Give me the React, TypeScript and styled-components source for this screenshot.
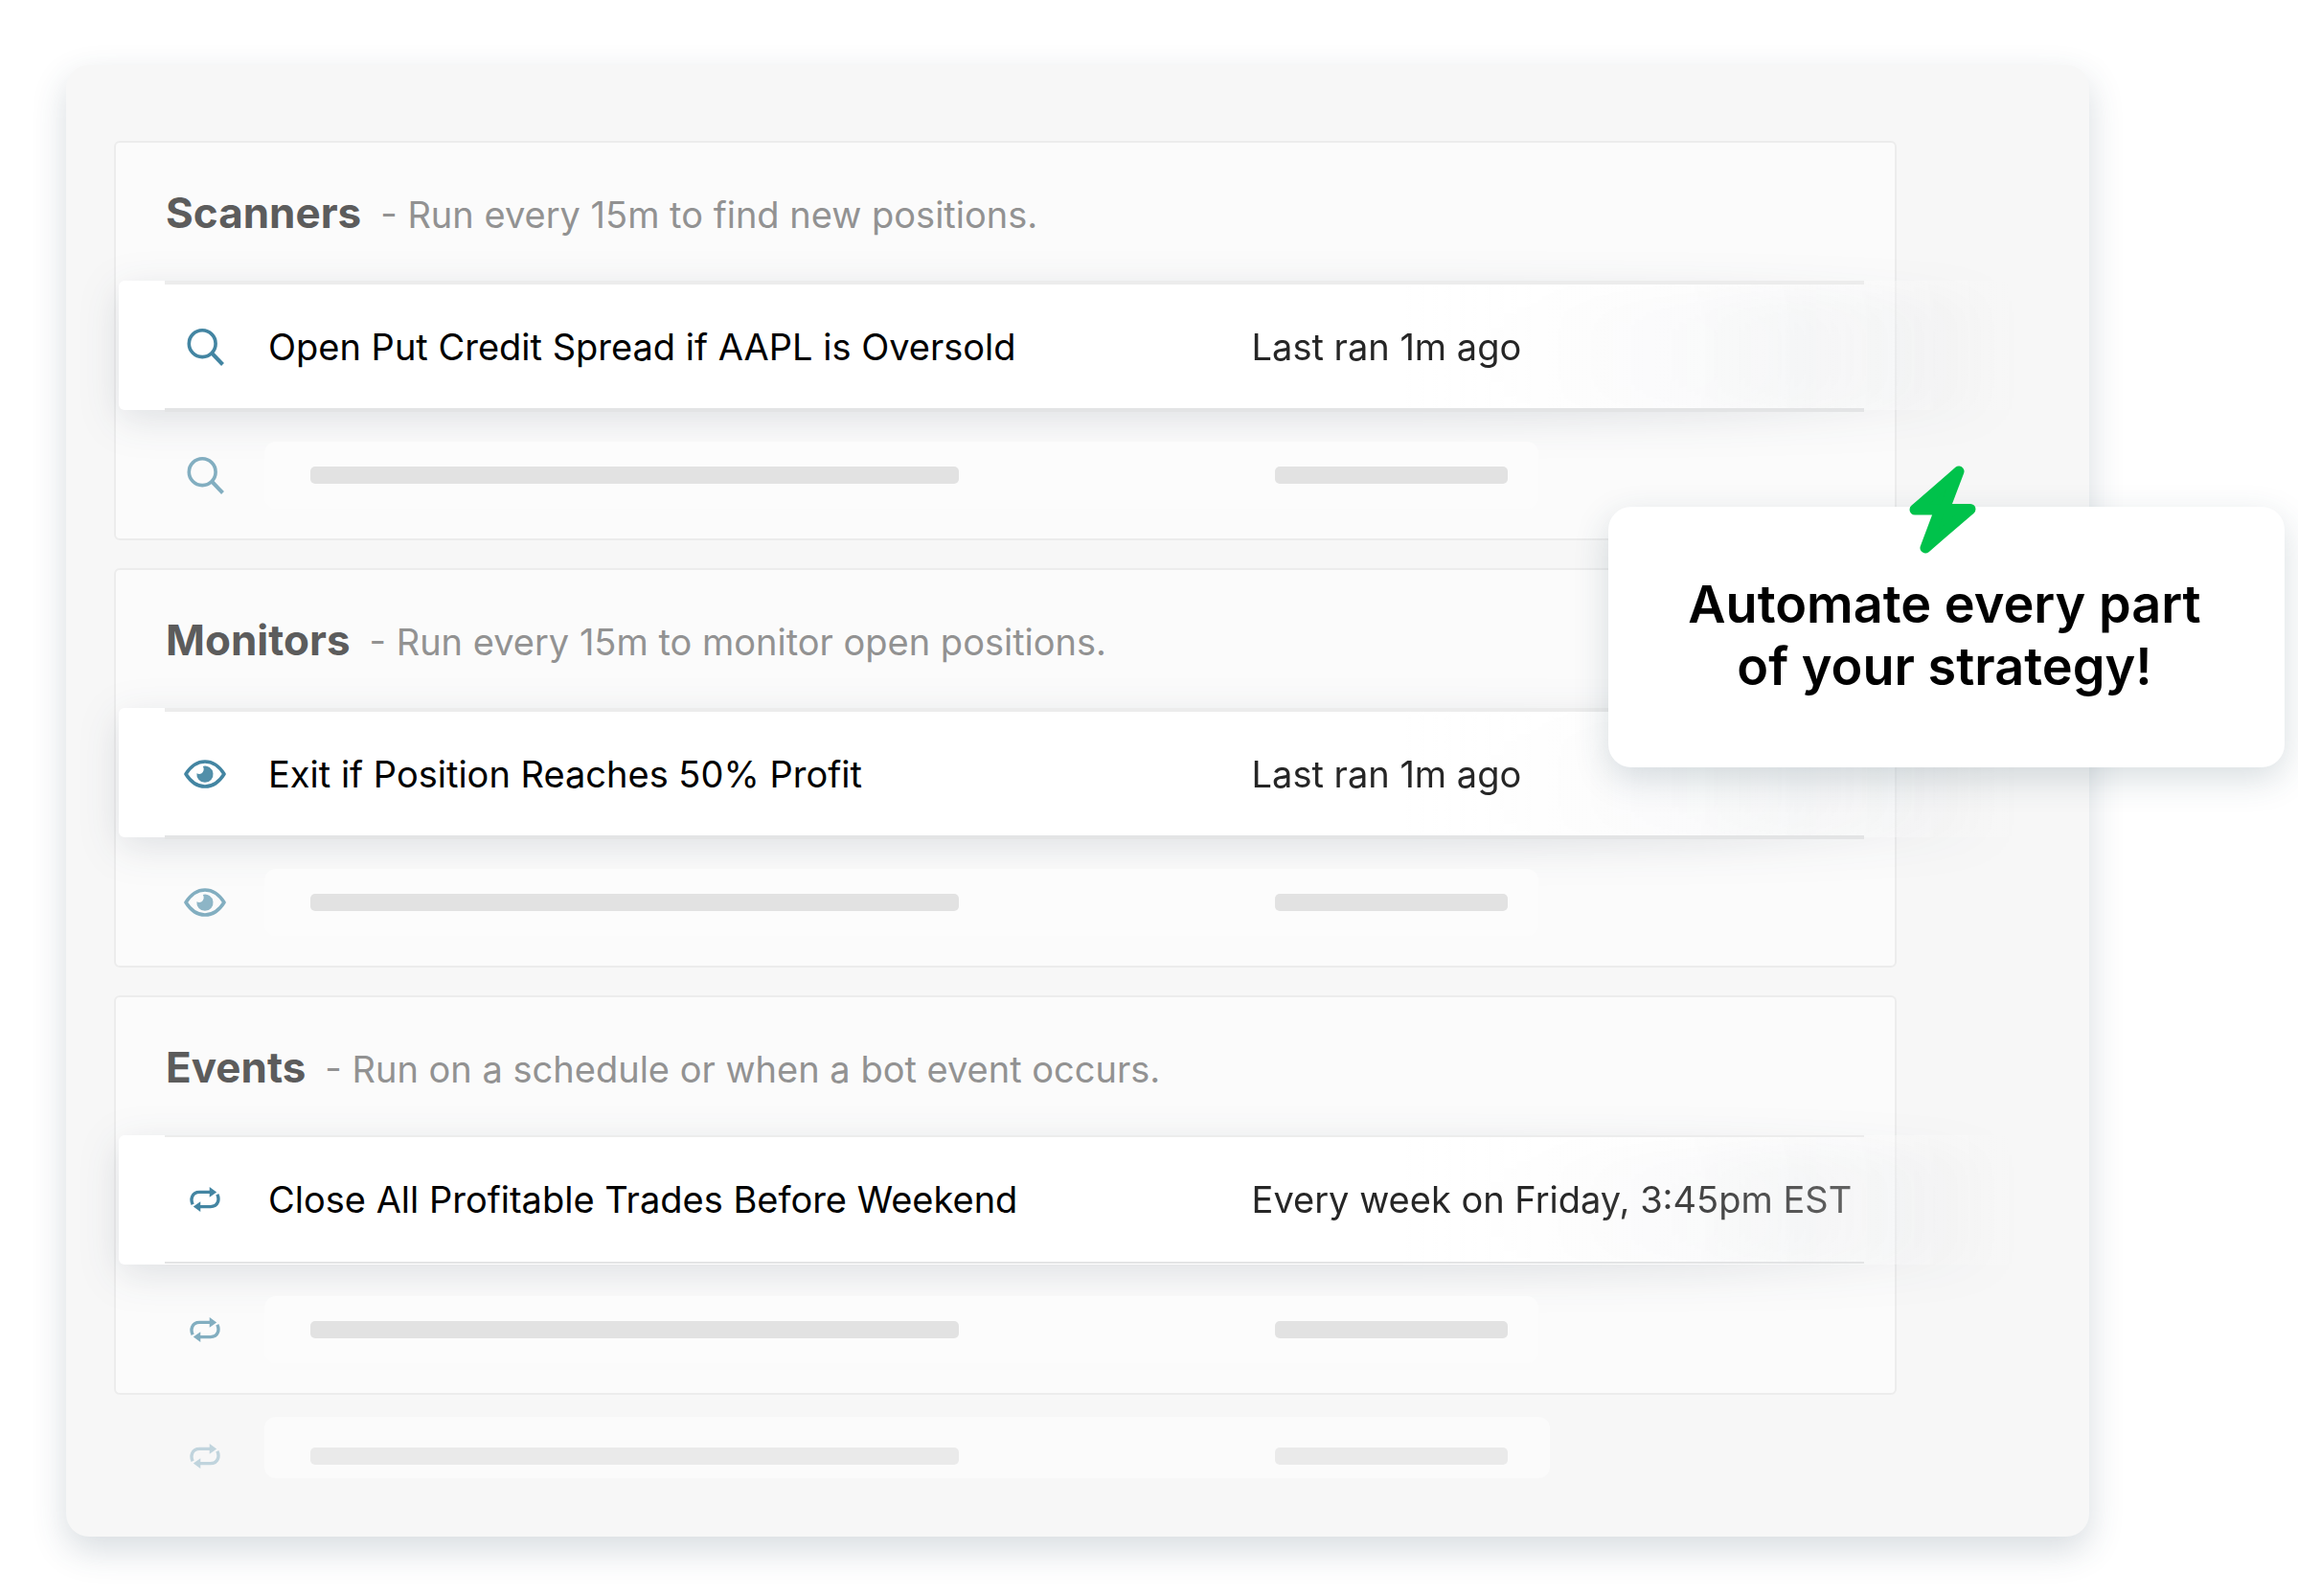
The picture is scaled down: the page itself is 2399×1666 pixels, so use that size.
import React from "react";
import styled, { createGlobalStyle } from "styled-components";

const GlobalStyle = createGlobalStyle`
  *, *::before, *::after { box-sizing: border-box; }
  body {
    margin: 0;
    background: #fff;
    color: #000;
    font-family: Inter, "Liberation Sans", sans-serif;
  }
  h2, p, ul { margin: 0; padding: 0; }
  ul { list-style: none; }
`;

const Page = styled.main`
  position: relative;
  padding: 68px 218px 61px 69px;
`;

const Panel = styled.div`
  display: flex;
  flex-direction: column;
  gap: 29px;
  padding: 79px 201px 61px 50px;
  border-radius: 24px;
  background: #f7f7f7;
  box-shadow: 0 14px 36px rgba(40, 70, 90, 0.19);
`;

const Card = styled.section`
  border: 2px solid #ececec;
  border-radius: 6px;
  background: #fbfbfb;
`;

const CardHeader = styled.header`
  display: flex;
  align-items: baseline;
  gap: 20px;
  height: 144px;
  padding: 45px 52px 0;
  white-space: nowrap;
`;

const Title = styled.h2`
  color: #5c5c5c;
  font-size: 44px;
  font-weight: 700;
  line-height: 56px;
`;

const Subtitle = styled.p`
  color: #929292;
  font-size: 38px;
  line-height: 56px;
`;

const ActiveRow = styled.li`
  position: relative;
  height: 137px;
  padding: 0 32px 0 51px;
`;

const Highlight = styled.div`
  position: absolute;
  top: 0;
  bottom: 2px;
  left: 3px;
  right: -120px;
  border-radius: 6px;
  background: linear-gradient(
    to right,
    #fff 68%,
    rgba(255, 255, 255, 0.96) 75%,
    rgba(255, 255, 255, 0.78) 84%,
    rgba(255, 255, 255, 0.35) 93%,
    rgba(255, 255, 255, 0)
  );
  filter: drop-shadow(0 10px 20px rgba(30, 50, 70, 0.13));
`;

const RowGrid = styled.div`
  display: grid;
  grid-template-columns: 84px minmax(0, 1002fr) minmax(0, 639fr);
  column-gap: 24px;
  align-items: center;
`;

const ActiveContent = styled(RowGrid)<{ $thin?: boolean }>`
  position: relative;
  height: ${(p) => (p.$thin ? 134 : 137)}px;
  border-top: ${(p) => (p.$thin ? 2 : 4)}px solid #ececec;
  border-bottom: ${(p) => (p.$thin ? 2 : 4)}px solid #e3e4e5;
`;

const IconCell = styled.div<{ $fade?: number }>`
  display: flex;
  align-items: center;
  justify-content: center;
  color: #4385a2;
  opacity: ${(p) => p.$fade ?? 1};
`;

const Name = styled.span`
  font-size: 38px;
  line-height: 48px;
  white-space: nowrap;
`;

const Meta = styled.span`
  color: #262626;
  font-size: 38px;
  line-height: 48px;
  white-space: nowrap;
  mask-image: linear-gradient(to right, #000 50%, rgba(0, 0, 0, 0.7));
`;

const IdleRow = styled(RowGrid).attrs({ as: "li" })`
  position: relative;
  height: 132px;
  margin: 0 32px 0 51px;
`;

const Placeholder = styled.div<{ $faint?: boolean }>`
  display: grid;
  grid-column: 2 / -1;
  grid-template-columns: minmax(0, 676fr) minmax(0, 243fr);
  column-gap: 330px;
  align-items: end;
  height: ${(p) => (p.$faint ? 64 : 70)}px;
  margin: 0 ${(p) => (p.$faint ? 328 : 340)}px 0 -4px;
  padding: 0 ${(p) => (p.$faint ? 44 : 32)}px ${(p) => (p.$faint ? 14 : 26)}px 48px;
  border-radius: 12px;
  background: ${(p) => (p.$faint ? "#fbfbfb" : "#fcfcfc")};
`;

const Bar = styled.span<{ $faint?: boolean }>`
  height: 18px;
  border-radius: 5px;
  background: ${(p) => (p.$faint ? "#eaeaea" : "#e2e2e2")};
`;

const TrailingRow = styled(RowGrid)`
  align-items: end;
  margin: -6px 34px 0 53px;
`;

const TrailingIcon = styled(IconCell)`
  height: 46px;
`;

const Callout = styled.aside`
  position: absolute;
  top: 529px;
  right: 14px;
  width: 706px;
  padding: 69px 44px 73px 40px;
  border-radius: 24px;
  background: #fff;
  box-shadow: 0 12px 36px rgba(40, 70, 90, 0.18);
  font-size: 54px;
  font-weight: 600;
  line-height: 65px;
  text-align: center;
`;

const CalloutIcon = styled.div`
  position: absolute;
  top: -44px;
  left: 0;
  right: 8px;
  display: flex;
  justify-content: center;
`;

const SearchIcon = () => (
  <svg width="40" height="40" viewBox="0 0 40 40" fill="none" stroke="currentColor" strokeWidth="3.6" aria-hidden="true">
    <circle cx="17.2" cy="16.7" r="13.9" />
    <path d="M27.5 27 38.5 38.5" strokeWidth="4" />
  </svg>
);

const EyeIcon = () => (
  <svg width="44" height="30" viewBox="0 0 44 30" fill="none" aria-hidden="true">
    <path
      d="M2 15C7 7 14 2 22 2s15 5 20 13c-5 8-12 13-20 13S7 23 2 15Z"
      stroke="currentColor"
      strokeWidth="3.6"
      strokeLinejoin="round"
    />
    <path
      d="M19.8 6.9a8.6 8.6 0 1 1-6.4 7.3c2.4 1.3 4.8.8 6.1-.9 1.5-2 1.6-4.3.3-6.4Z"
      fill="currentColor"
      fillOpacity="0.92"
    />
  </svg>
);

const RepeatIcon = () => (
  <svg width="32" height="26" viewBox="0 0 94 77" fill="none" aria-hidden="true">
    <g stroke="currentColor" strokeWidth="10">
      <path d="M9 54C2 40 5 16 30 16H64" />
      <path d="M85 23C92 37 89 61 64 61H30" />
    </g>
    <path d="M61 0 83 16 61 32ZM33 45 11 61l22 16Z" fill="currentColor" />
  </svg>
);

const BoltIcon = () => (
  <svg width="72" height="94" viewBox="0 0 72 94" aria-hidden="true">
    <path
      d="M53 7 38 46.5H65L18 87 33 47H7Z"
      fill="#00c24b"
      stroke="#00c24b"
      strokeWidth="11"
      strokeLinejoin="round"
    />
  </svg>
);

type Automation = {
  title: string;
  subtitle: string;
  name: string;
  meta: string;
  icon: React.ComponentType;
  thin?: boolean;
};

const automations: Automation[] = [
  {
    title: "Scanners",
    subtitle: "- Run every 15m to find new positions.",
    name: "Open Put Credit Spread if AAPL is Oversold",
    meta: "Last ran 1m ago",
    icon: SearchIcon,
  },
  {
    title: "Monitors",
    subtitle: "- Run every 15m to monitor open positions.",
    name: "Exit if Position Reaches 50% Profit",
    meta: "Last ran 1m ago",
    icon: EyeIcon,
  },
  {
    title: "Events",
    subtitle: "- Run on a schedule or when a bot event occurs.",
    name: "Close All Profitable Trades Before Weekend",
    meta: "Every week on Friday, 3:45pm EST",
    icon: RepeatIcon,
    thin: true,
  },
];

function AutomationCard({ title, subtitle, name, meta, icon: Icon, thin }: Automation) {
  return (
    <Card>
      <CardHeader>
        <Title>{title}</Title>
        <Subtitle>{subtitle}</Subtitle>
      </CardHeader>
      <ul>
        <ActiveRow>
          <Highlight />
          <ActiveContent $thin={thin}>
            <IconCell>
              <Icon />
            </IconCell>
            <Name>{name}</Name>
            <Meta>{meta}</Meta>
          </ActiveContent>
        </ActiveRow>
        <IdleRow>
          <IconCell $fade={0.65}>
            <Icon />
          </IconCell>
          <Placeholder>
            <Bar />
            <Bar />
          </Placeholder>
        </IdleRow>
      </ul>
    </Card>
  );
}

export default function App() {
  return (
    <>
      <GlobalStyle />
      <Page>
        <Panel>
          {automations.map((item) => (
            <AutomationCard key={item.title} {...item} />
          ))}
          <TrailingRow>
            <TrailingIcon $fade={0.3}>
              <RepeatIcon />
            </TrailingIcon>
            <Placeholder $faint>
              <Bar $faint />
              <Bar $faint />
            </Placeholder>
          </TrailingRow>
        </Panel>
        <Callout>
          <CalloutIcon>
            <BoltIcon />
          </CalloutIcon>
          Automate every part
          <br />
          of your strategy!
        </Callout>
      </Page>
    </>
  );
}
